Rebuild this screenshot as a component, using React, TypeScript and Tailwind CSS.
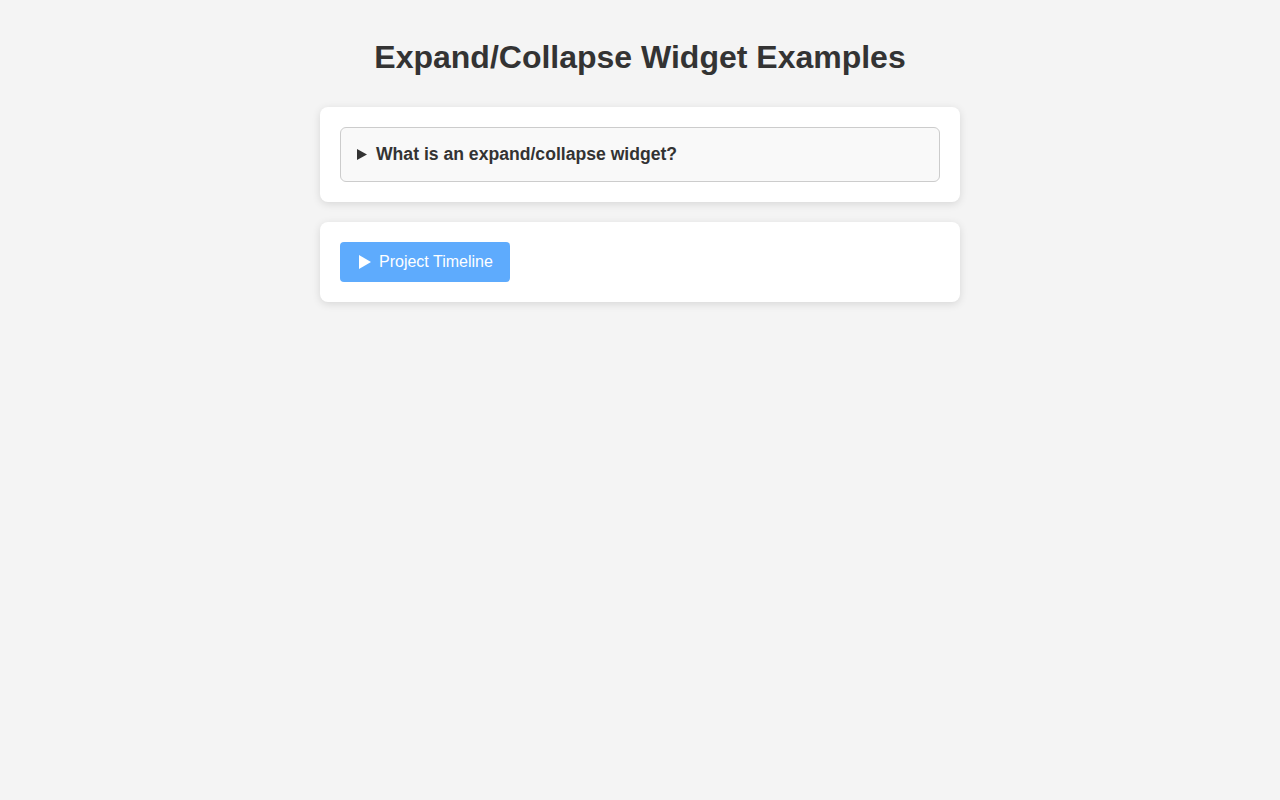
export default function App() {
  return (
    <div className="min-h-[800px] bg-[#f4f4f4] px-5 pt-[39px] text-[#333]" style={{ fontFamily: '"Liberation Sans", Arial, sans-serif' }}>
      <h1 className="mb-[31px] text-center text-[32px] font-bold leading-[37px]">Expand/Collapse Widget Examples</h1>
      <div className="mx-auto flex w-[640px] flex-col gap-[20px]">
        <div className="rounded-[8px] bg-white p-5 shadow-[0_2px_8px_rgba(0,0,0,0.12)]">
          <div className="flex h-[55px] items-center rounded-[6px] border border-[#cccccc] bg-[#f9f9f9] px-4">
            <svg width="10" height="11" viewBox="0 0 10 11" className="mr-[9px]">
              <path d="M0 0 L10 5.5 L0 11 Z" fill="#333" />
            </svg>
            <span className="text-[17.6px] font-bold">What is an expand/collapse widget?</span>
          </div>
        </div>
        <div className="rounded-[8px] bg-white p-5 shadow-[0_2px_8px_rgba(0,0,0,0.12)]">
          <button className="flex h-[40px] w-[170px] items-center rounded-[4px] bg-[#5eabfd] pl-[19px] text-[16px] text-white">
            <svg width="12" height="14" viewBox="0 0 12 14" className="mr-[8px]">
              <path d="M0 0 L12 7 L0 14 Z" fill="#fff" />
            </svg>
            Project Timeline
          </button>
        </div>
      </div>
    </div>
  );
}
